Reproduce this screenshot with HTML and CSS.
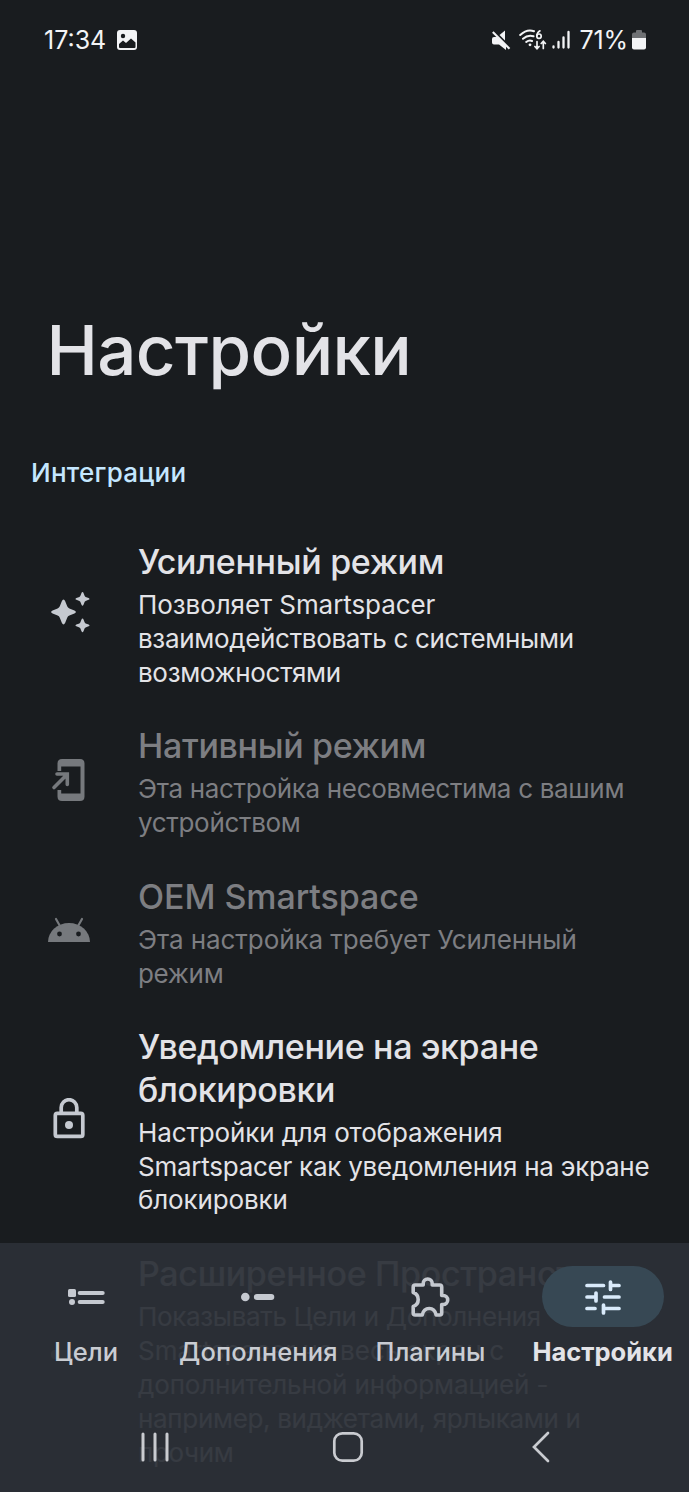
FILE: index.html
```
<!DOCTYPE html>
<html lang="ru">
<head>
<meta charset="utf-8">
<title>Настройки</title>
<link rel="stylesheet" href="styles.css">
</head>
<body>
<div class="screen">
  <header class="status">
    <span class="clock">17:34</span>
    <svg class="pic" width="20" height="20" viewBox="0 0 20 20"><rect width="20" height="20" rx="3" fill="#f3f4f6"/><circle cx="6" cy="6" r="2.2" fill="#191c1f"/><path d="M2 14l4-3.500 3 2.500 5-4.500 4.500 4v4.500q0 1-1 1H3q-1 0-1-1z" fill="#191c1f"/></svg>
    <div class="right">
      <svg class="mute" width="20" height="20" viewBox="0 0 20 20" fill="#f3f4f6"><path d="M1 9q0-2 2-2h3l9 9v4L8 14.500H3q-2 0-2-2z"/><path d="M8.500 5l5.500-4.500V10.500z"/><path d="M1.800 2L18.500 18.700" stroke="#f3f4f6" stroke-width="2.100"/></svg>
      <svg class="wifi" width="28" height="22" viewBox="0 0 28 22" fill="none" stroke="#f3f4f6" stroke-width="2" stroke-linecap="round"><path d="M1.200 6Q8-.5 15 2.200M4 9.800Q9 5.300 14.500 7.300M7.200 13Q10.200 10.800 13 12"/><circle cx="11" cy="15.800" r="1.400" fill="#f3f4f6" stroke="none"/><circle cx="20" cy="7.200" r="2.200" stroke-width="1.700"/><path d="M21 1.800Q18 3.500 17.800 7" stroke-width="1.700"/><path d="M18 12.500v7M15.900 17.500l2.100 2.200 2.100-2.200M24.300 19.500v-7M22.200 14.500l2.100-2.200 2.100 2.200" stroke-width="1.700"/></svg>
      <svg class="signal" width="18" height="20" viewBox="0 0 18 20" stroke="#f3f4f6" stroke-width="2.300" stroke-linecap="round"><path d="M1.500 16.500v1M6.500 12v5.500M11.500 7.500v10M16.500 2v15.500"/></svg>
      <span class="pct">71%</span>
      <svg class="bat" width="14" height="20" viewBox="0 0 14 20"><path d="M4 1q0-1 1-1h4q1 0 1 1v1.500h2q2 0 2 2V8H0V4.500q0-2 2-2h2z" fill="#6f7174"/><path d="M0 8h14v9.500q0 2-2 2H2q-2 0-2-2z" fill="#f3f4f6"/></svg>
    </div>
  </header>
  <h1 class="heading">Настройки</h1>
  <h2 class="section">Интеграции</h2>
  <main class="list">
    <section class="item">
      <svg class="icon" width="42" height="42" viewBox="0 0 42 42" fill="#c5c9d0"><path d="M15.500 8.500q1 0 1.700 1.800l2 5q.6 1.600 2.200 2.200l5 2q3 1.500 0 3l-5 2q-1.600.6-2.200 2.200l-2 5q-1.700 3.400-3.400 0l-2-5q-.6-1.600-2.200-2.200l-5-2q-3-1.500 0-3l5-2q1.600-.6 2.200-2.200l2-5q.7-1.800 1.700-1.800z"/><path id="star" d="M34.500 1q.7 0 1 1l1.200 3 .9.900 3 1.200q1.800.8 0 1.600l-3 1.200-.9.900-1.200 3q-1 2-2 0l-1.200-3-.9-.9-3-1.200q-1.800-.8 0-1.600l3-1.200.9-.9 1.200-3q.3-1 1-1z"/><use href="#star" y="26.500"/></svg>
      <div class="text"><h3>Усиленный режим</h3><p><span class="loose">Позволяет Smartspacer</span><br>взаимодействовать с системными<br>возможностями</p></div>
    </section>
    <section class="item off">
      <svg class="icon" width="42" height="42" viewBox="0 0 42 42" fill="#76797d"><path d="M9.500 12V4.500Q9.500 0 14 0h18Q36.500 0 36.500 4.500v33q0 4.500-4.500 4.500H14q-4.500 0-4.500-4.500V31h3.700v3.500h19.300v-27H13.200V12z"/><path d="M6 28.500L19 15.500M9 15h10.300v10.500" fill="none" stroke="#76797d" stroke-width="3.600" stroke-linecap="round"/></svg>
      <div class="text"><h3>Нативный режим</h3><p>Эта настройка несовместима с вашим<br>устройством</p></div>
    </section>
    <section class="item off">
      <svg class="icon" width="42" height="42" viewBox="0 0 42 42"><path d="M0 33a21 19 0 0 1 42 0z" fill="#76797d"/><path d="M8 10l4.500 8M34 10l-4.500 8" stroke="#76797d" stroke-width="2.200" stroke-linecap="round"/><circle cx="11.500" cy="25" r="2.400" fill="#191c1f"/><circle cx="30.500" cy="25" r="2.400" fill="#191c1f"/></svg>
      <div class="text"><h3 class="loose">OEM Smartspace</h3><p><span class="loose">Эта настройка требует Усиленный</span><br>режим</p></div>
    </section>
    <section class="item">
      <svg class="icon" width="42" height="42" viewBox="0 0 42 42" fill="none" stroke="#c5c9d0" stroke-width="3.700"><rect x="7.300" y="15.400" width="27.500" height="23" rx="2"/><path d="M13.200 15V9.500a7.800 7.800 0 0 1 15.600 0V15"/><circle cx="21" cy="27" r="4" fill="#c5c9d0" stroke="none"/></svg>
      <div class="text"><h3>Уведомление на экране<br>блокировки</h3><p><span class="mid">Настройки для отображения</span><br><span class="long">Smartspacer как уведомления на экране</span><br><span class="mid">блокировки</span></p></div>
    </section>
    <section class="item">
      <svg class="icon" width="42" height="42" viewBox="0 0 42 42" fill="#76797d"><rect x="3" y="13" width="36" height="9" rx="4"/></svg>
      <div class="text"><h3>Расширенное Пространство</h3><p>Показывать Цели и Дополнения<br><span class="full">Smartspacer на весь экран с</span><br><span class="mid">дополнительной информацией -</span><br>например, виджетами, ярлыками и<br>прочим</p></div>
    </section>
  </main>
  <footer class="bottom">
    <nav class="tabs">
      <div class="tab"><span class="pill"><svg width="42" height="42" viewBox="0 0 42 42" fill="#c5c9d0"><rect x="3" y="13" width="8" height="8" rx="1.500"/><circle cx="7" cy="26" r="3"/><rect x="12.700" y="15" width="27" height="4" rx="2"/><rect x="12.700" y="24" width="27" height="4" rx="2"/></svg></span><span class="label">Цели</span></div>
      <div class="tab"><span class="pill"><svg width="42" height="42" viewBox="0 0 42 42" fill="#c5c9d0"><circle cx="8.300" cy="21" r="4.300"/><rect x="16.800" y="18" width="20.500" height="6" rx="3"/></svg></span><span class="label wide">Дополнения</span></div>
      <div class="tab"><span class="pill"><svg width="42" height="42" viewBox="1.300 0 42 42" fill="none" stroke="#c5c9d0" stroke-width="3.600" stroke-linejoin="round"><path d="M5.500 11q0-2 2-2h8V7.500a4.500 4.500 0 0 1 9 0V9H32q2 0 2 2v8.500h1.500a4.500 4.500 0 0 1 0 9H34V37q0 2-2 2h-3.500q-1.500-6.500-7-6.500t-7 6.500H7.500q-2 0-2-2v-6.500q5-1.700 5-7t-5-7z"/></svg></span><span class="label">Плагины</span></div>
      <div class="tab active"><span class="pill"><svg width="42" height="42" viewBox="0 0 42 42" stroke="#d9eafa" stroke-width="3.700" stroke-linecap="round" fill="none"><path d="M5 9.500H21.500M30 9.500h7M5 21H13.500M22.500 21H37M5 32.500H13M23 32.500h14M28.500 6v7.500M14 17v8M21.500 29v8"/></svg></span><span class="label">Настройки</span></div>
    </nav>
    <div class="sysnav">
      <svg width="30" height="32" viewBox="0 0 30 32" stroke="#c9cbd0" stroke-width="3" stroke-linecap="round"><path d="M3 3v26M15 3v26M27 3v26"/></svg>
      <svg width="32" height="32" viewBox="0 0 32 32" fill="none" stroke="#c9cbd0" stroke-width="2.700"><rect x="2.300" y="2.300" width="27.400" height="27.400" rx="8"/></svg>
      <svg width="20" height="32" viewBox="0 0 20 32" fill="none" stroke="#c9cbd0" stroke-width="2.700" stroke-linecap="round"><path d="M17 2L3 16l14 14"/></svg>
    </div>
  </footer>
</div>
</body>
</html>
```
FILE: styles.css
```
* { box-sizing: border-box; margin: 0; padding: 0; }
body { background: #191c1f; font-family: Inter, "Noto Sans", sans-serif; color: #e3e3e7; }
.screen { position: relative; width: 689px; height: 1492px; overflow: hidden; }
.status { display: flex; align-items: center; height: 80px; padding: 0 43px 0 44px; color: #f3f4f6; font-size: 25px; }
.pic { margin-left: 11px; }
.right { display: flex; align-items: center; margin-left: auto; }
.mute { margin-right: -1px; }
.wifi { margin-left: 9px; }
.signal { margin-left: 5px; margin-right: 1px; }
.pct { margin-left: 8px; letter-spacing: -.1px; }
.bat { margin-left: 4px; }
.heading { margin: 228px 0 0 44px; text-indent: 2.500px; height: 84px; font-size: 69px; line-height: 84px; font-weight: 500; letter-spacing: -.6px; white-space: nowrap; }
.section { margin: 65px 0 0 31px; height: 32px; line-height: 32px; font-size: 26px; font-weight: 500; letter-spacing: .25px; color: #c4e7ff; }
.list { margin-top: 31.4px; }
.item { display: flex; align-items: center; padding-left: 48px; }
.icon { flex: none; margin: 0 48px 1px 0; }
.text { padding: 20.4px 0 15.200px; white-space: nowrap; }
.text h3 { font-size: 34px; line-height: 42.400px; font-weight: 500; letter-spacing: -.32px; }
.text p { margin-top: 4.700px; font-size: 26px; line-height: 33.900px; letter-spacing: -.32px; }
.text .loose { letter-spacing: -.07px; }
.text .mid { letter-spacing: -.13px; }
.text .long { letter-spacing: -.25px; }
.text .full { letter-spacing: .04px; }
.off { color: #7d7e82; }
.bottom { position: absolute; left: 0; right: 0; bottom: 0; height: 249px; background: rgba(44, 48, 55, .94); }
.tabs { display: grid; grid-template-columns: repeat(4, 172.200px); height: 160px; padding-top: 23px; }
.tab { display: flex; flex-direction: column; align-items: center; }
.pill { display: flex; align-items: center; justify-content: center; width: 122px; height: 61px; border-radius: 31px; }
.active .pill { background: #374854; }
.label { margin-top: 9px; font-size: 25.500px; line-height: 32px; font-weight: 500; color: #c9ccd2; white-space: nowrap; }
.label.wide { letter-spacing: .1px; }
.active .label { font-weight: 700; color: #e3e3e7; }
.sysnav { display: flex; align-items: center; height: 88px; padding-left: 140px; }
.sysnav svg + svg { margin-left: 161.500px; }
.sysnav svg + svg + svg { margin-left: 167.500px; }
```
